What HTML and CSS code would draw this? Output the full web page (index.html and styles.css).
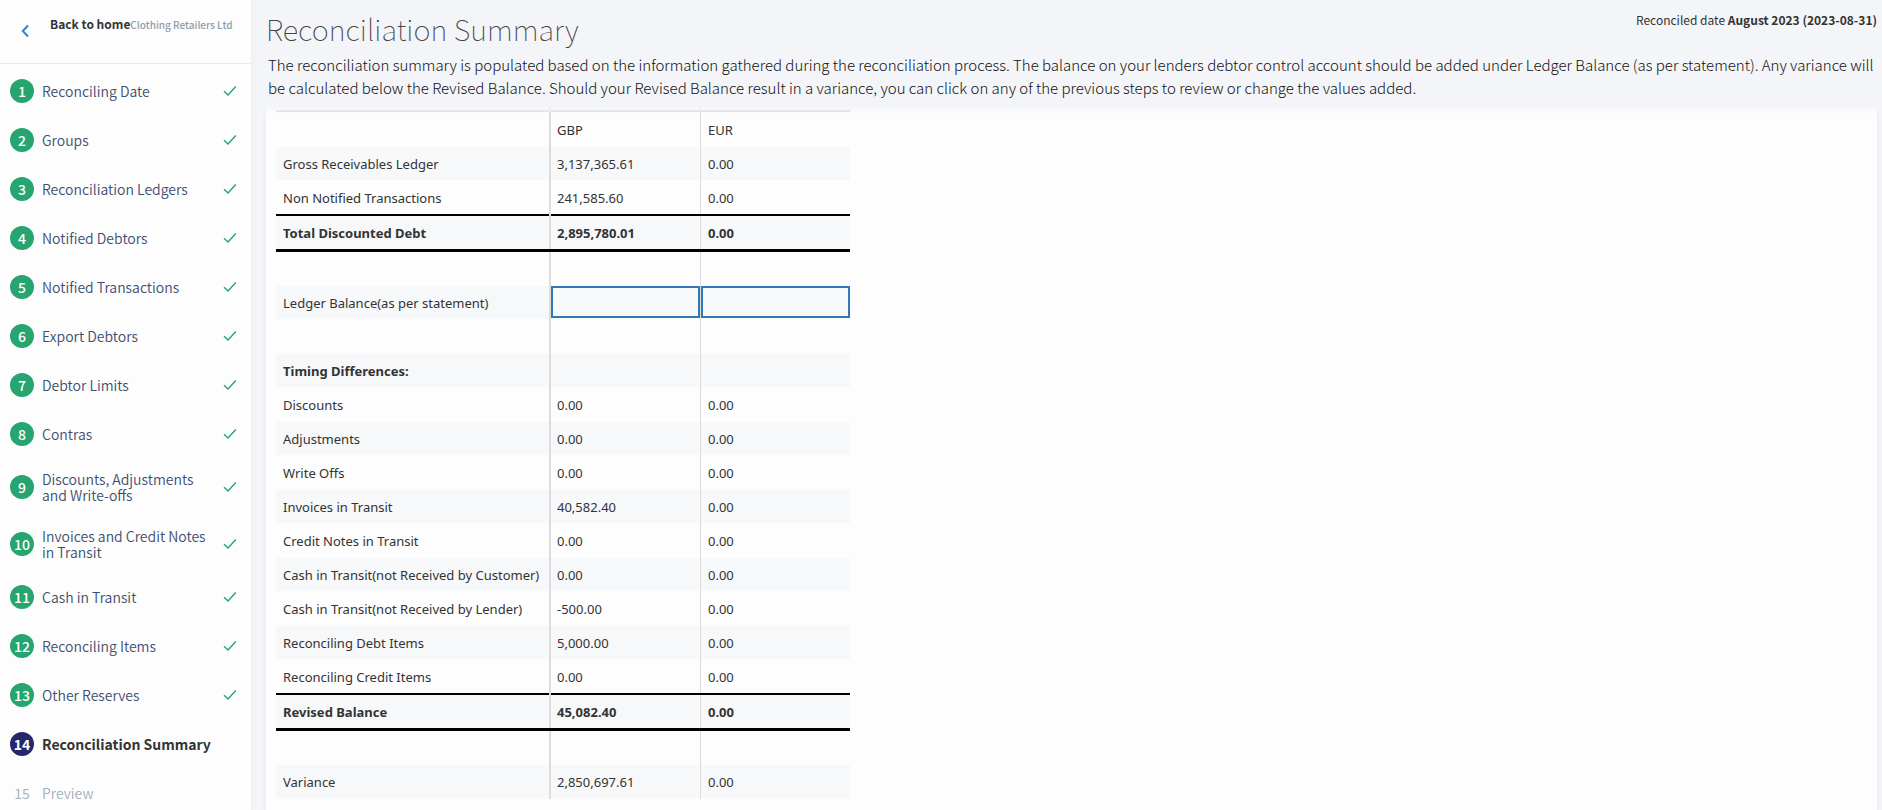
FILE: index.html
```html
<!DOCTYPE html>
<html lang="en">
<head>
<meta charset="utf-8">
<title>Reconciliation Summary</title>
<link rel="stylesheet" href="styles.css">
</head>
<body>
<svg class="defs" aria-hidden="true"><symbol id="check" viewBox="0 0 14 12"><path d="M1 6.3 5 10 12.8 1.6" fill="none" stroke="currentColor" stroke-width="1.4"/></symbol></svg>
<div class="app">
  <aside class="sidebar">
    <header class="home">
      <svg class="back" viewBox="0 0 8 14" aria-hidden="true"><path d="M7 1.5 1.8 7 7 12.5" fill="none" stroke="currentColor" stroke-width="2"/></svg>
      <a class="home-link" href="#">Back to home</a><span class="client">Clothing Retailers Ltd</span>
    </header>
    <nav>
      <ol class="steps">
        <li><a href="#" class="step"><span class="num">1</span><span class="name">Reconciling Date</span><svg class="check"><use href="#check"/></svg></a></li>
        <li><a href="#" class="step"><span class="num">2</span><span class="name">Groups</span><svg class="check"><use href="#check"/></svg></a></li>
        <li><a href="#" class="step"><span class="num">3</span><span class="name">Reconciliation Ledgers</span><svg class="check"><use href="#check"/></svg></a></li>
        <li><a href="#" class="step"><span class="num">4</span><span class="name">Notified Debtors</span><svg class="check"><use href="#check"/></svg></a></li>
        <li><a href="#" class="step"><span class="num">5</span><span class="name">Notified Transactions</span><svg class="check"><use href="#check"/></svg></a></li>
        <li><a href="#" class="step"><span class="num">6</span><span class="name">Export Debtors</span><svg class="check"><use href="#check"/></svg></a></li>
        <li><a href="#" class="step"><span class="num">7</span><span class="name">Debtor Limits</span><svg class="check"><use href="#check"/></svg></a></li>
        <li><a href="#" class="step"><span class="num">8</span><span class="name">Contras</span><svg class="check"><use href="#check"/></svg></a></li>
        <li><a href="#" class="step"><span class="num">9</span><span class="name">Discounts, Adjustments and Write-offs</span><svg class="check"><use href="#check"/></svg></a></li>
        <li><a href="#" class="step"><span class="num">10</span><span class="name">Invoices and Credit Notes in Transit</span><svg class="check"><use href="#check"/></svg></a></li>
        <li><a href="#" class="step"><span class="num">11</span><span class="name">Cash in Transit</span><svg class="check"><use href="#check"/></svg></a></li>
        <li><a href="#" class="step"><span class="num">12</span><span class="name">Reconciling Items</span><svg class="check"><use href="#check"/></svg></a></li>
        <li><a href="#" class="step"><span class="num">13</span><span class="name">Other Reserves</span><svg class="check"><use href="#check"/></svg></a></li>
        <li><a href="#" class="step current" aria-current="step"><span class="num">14</span><span class="name">Reconciliation Summary</span></a></li>
        <li><a href="#" class="step pending"><span class="num">15</span><span class="name">Preview</span></a></li>
      </ol>
    </nav>
  </aside>
  <main class="main">
    <header class="intro">
      <div class="title-row">
        <h1>Reconciliation Summary</h1>
        <p class="date">Reconciled date <strong>August 2023 (2023-08-31)</strong></p>
      </div>
      <p class="lead">The reconciliation summary is populated based on the information gathered during the reconciliation process. The balance on your lenders debtor control account should be added under Ledger Balance (as per statement). Any variance will be calculated below the Revised Balance. Should your Revised Balance result in a variance, you can click on any of the previous steps to review or change the values added.</p>
    </header>
    <section class="panel">
      <table class="summary">
        <colgroup><col class="c-label"><col class="c-first"><col class="c-next"></colgroup>
        <thead>
          <tr class="lead-in"><td></td><td></td><td></td></tr>
          <tr class="head"><td></td><th scope="col">GBP</th><th scope="col">EUR</th></tr>
        </thead>
        <tbody>
          <tr class="alt"><th scope="row">Gross Receivables Ledger</th><td>3,137,365.61</td><td>0.00</td></tr>
          <tr class="before-total"><th scope="row">Non Notified Transactions</th><td>241,585.60</td><td>0.00</td></tr>
          <tr class="alt total"><th scope="row">Total Discounted Debt</th><td>2,895,780.01</td><td>0.00</td></tr>
          <tr><td></td><td></td><td></td></tr>
          <tr class="alt"><th scope="row">Ledger Balance(as per statement)</th><td class="entry"><input type="text" aria-label="Ledger Balance GBP"></td><td class="entry"><input type="text" aria-label="Ledger Balance EUR"></td></tr>
          <tr><td></td><td></td><td></td></tr>
          <tr class="alt"><th scope="row" class="group">Timing Differences:</th><td></td><td></td></tr>
          <tr><th scope="row">Discounts</th><td>0.00</td><td>0.00</td></tr>
          <tr class="alt"><th scope="row">Adjustments</th><td>0.00</td><td>0.00</td></tr>
          <tr><th scope="row">Write Offs</th><td>0.00</td><td>0.00</td></tr>
          <tr class="alt"><th scope="row">Invoices in Transit</th><td>40,582.40</td><td>0.00</td></tr>
          <tr><th scope="row">Credit Notes in Transit</th><td>0.00</td><td>0.00</td></tr>
          <tr class="alt"><th scope="row">Cash in Transit(not Received by Customer)</th><td>0.00</td><td>0.00</td></tr>
          <tr><th scope="row">Cash in Transit(not Received by Lender)</th><td>-500.00</td><td>0.00</td></tr>
          <tr class="alt"><th scope="row">Reconciling Debt Items</th><td>5,000.00</td><td>0.00</td></tr>
          <tr class="before-total"><th scope="row">Reconciling Credit Items</th><td>0.00</td><td>0.00</td></tr>
          <tr class="alt total"><th scope="row">Revised Balance</th><td>45,082.40</td><td>0.00</td></tr>
          <tr><td></td><td></td><td></td></tr>
          <tr class="alt"><th scope="row">Variance</th><td>2,850,697.61</td><td>0.00</td></tr>
        </tbody>
      </table>
    </section>
  </main>
</div>
</body>
</html>
```
FILE: styles.css
```css
* { box-sizing: border-box; }

body {
  margin: 0;
  height: 100vh;
  overflow: hidden;
  background: #f4f5f8;
  color: #333;
  font-family: "Noto Sans CJK SC", "Noto Sans", sans-serif;
  font-size: 14px;
}

h1, p, ol { margin: 0; padding: 0; }

a { color: inherit; text-decoration: none; }

.defs { display: none; }

.app {
  display: grid;
  grid-template-columns: 251px 1fr;
  min-height: 100vh;
}

/* Sidebar */

.sidebar {
  background: #fdfdfd;
  box-shadow: 0 0 8px rgba(40, 50, 80, 0.05);
}

.home {
  display: flex;
  align-items: flex-start;
  height: 64px;
  padding: 16px 0 0 21px;
  border-bottom: 1px solid #e9eaec;
  line-height: 16px;
  white-space: nowrap;
}

.back {
  width: 8px;
  height: 14px;
  margin: 8px 21px 0 0;
  color: #2f86d0;
}

.home-link { font-size: 12px; font-weight: 700; }

.client {
  color: #8b9eab;
  font-size: 10px;
  font-weight: 500;
  line-height: 18px;
}

.steps {
  display: flex;
  flex-direction: column;
  gap: 25px;
  padding: 15px 14px 0 10px;
  list-style: none;
}

.step {
  display: flex;
  align-items: center;
  gap: 8px;
  color: #3d4f70;
  font-weight: 350;
  line-height: 16px;
}

.num {
  flex: none;
  width: 24px;
  border-radius: 50%;
  background: #27a570;
  color: #fff;
  font-weight: 500;
  line-height: 24px;
  text-align: center;
}

.name { flex: 1; }

.check {
  flex: none;
  width: 14px;
  height: 12px;
  color: #27a570;
}

.current { color: #333; font-weight: 700; }
.current .num { background: #26276b; font-weight: 700; }

.pending { color: #a5b0b9; }
.pending .num { background: none; color: inherit; font-weight: 350; }

/* Main column */

.main {
  display: flex;
  flex-direction: column;
  padding: 0 5px 0 15px;
}

.intro { height: 106px; }

.title-row {
  display: flex;
  justify-content: space-between;
  height: 53px;
}

h1 {
  color: #444;
  font-size: 29px;
  font-weight: 100;
  line-height: 56px;
}

.date {
  font-size: 12px;
  line-height: 20px;
  padding-top: 10px;
}

.lead {
  padding: 0 2px;
  color: #111;
  font-size: 15px;
  font-weight: 300;
  line-height: 23px;
}

.panel {
  flex: 1;
  padding: 0 10px;
  background: linear-gradient(#f4f5f8, #fdfdfd 8px);
  box-shadow: 0 4px 6px rgba(40, 50, 80, 0.06);
}

.summary {
  width: 574px;
  table-layout: fixed;
  border-spacing: 0;
  font-family: "Noto Sans", sans-serif;
  font-size: 13px;
  line-height: 20px;
}

.c-label { width: 273px; }
.c-first { width: 151px; }
.c-next { width: 150px; }

/* Column rules and row rules are inset shadows so their overlap order is explicit. */
.summary td,
.summary th {
  --col: inset 0 0 #dcdcdc;
  --row: inset 0 -1px #fdfdfd;
  height: 34px;
  padding: 0 0 0 7px;
  font-weight: 400;
  text-align: left;
  white-space: nowrap;
  box-shadow: var(--col), var(--row);
}

.summary tr > :nth-child(2) { --col: inset 2px 0 #dcdcdc; padding-left: 8px; }
.summary tr > :nth-child(3) { --col: inset 1px 0 #dcdcdc; padding-left: 8px; }

.summary .lead-in > :nth-child(2) { --col: inset 2px 0 #ebecee; }
.summary .lead-in > :nth-child(3) { --col: inset 1px 0 #ebecee; }

.summary .alt > * { background: #f7f8fa; }

.summary .lead-in td { --row: inset 0 -2px #e5e5e5; height: 6px; }
.summary .head > * { height: 35px; }

.summary .before-total > * { --row: inset 0 -2px #000; height: 35px; padding-bottom: 1px; }
.summary .before-total > :nth-child(3) { box-shadow: var(--row), var(--col); }

.summary .total > * {
  height: 36px;
  padding-bottom: 2px;
  font-weight: 700;
  box-shadow: inset 0 -3px #000, var(--col);
}

.summary .group { font-weight: 700; }

.summary tr > .entry { vertical-align: top; }
.summary tr > .entry:nth-child(2) { padding-left: 2px; }
.summary tr > .entry:nth-child(3) { padding-left: 1px; }

.entry input {
  display: block;
  width: 100%;
  height: 32px;
  padding: 0 6px;
  border: 2px solid #2f79b9;
  border-radius: 0;
  background: transparent;
  font: inherit;
  outline: 0;
}
```
